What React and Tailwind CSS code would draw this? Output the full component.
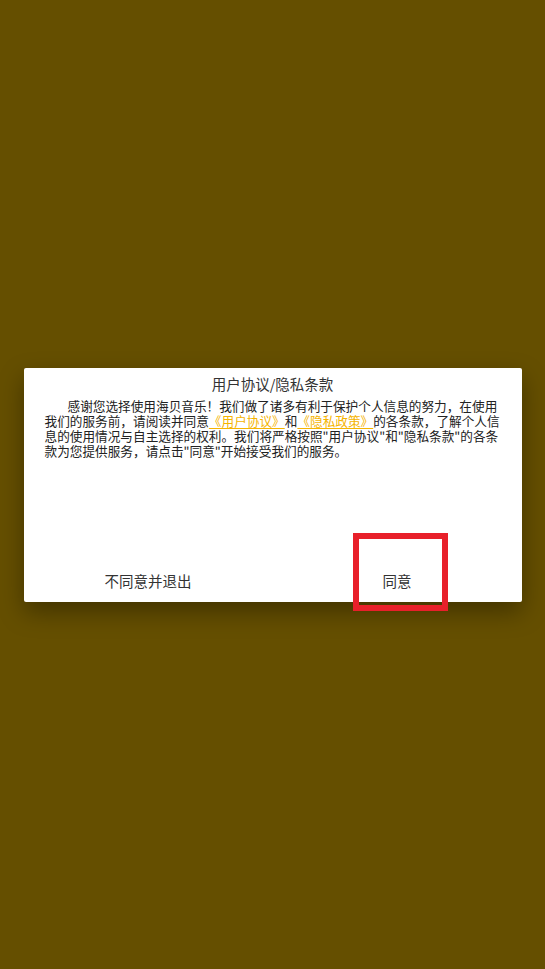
export default function App() {
  const font = { fontFamily: '"Noto Sans CJK SC", "Noto Sans", sans-serif' };

  return (
    <div className="flex h-[969px] w-full items-center justify-center bg-[#654f00]" style={font}>
      {/* 协议弹窗 */}
      <div className="relative flex h-[234px] w-[498px] flex-col rounded-[2px] bg-white shadow-[0_10px_24px_rgba(0,0,0,0.35)]">
        <div className="pt-[7px] text-center text-[14.5px] leading-[18px] text-[#333]">用户协议/隐私条款</div>

        <div className="mt-[5px] px-[21px] text-[12.65px] leading-[15px] text-[#222]">
          <div className="whitespace-nowrap pl-[23px]">感谢您选择使用海贝音乐！我们做了诸多有利于保护个人信息的努力，在使用</div>
          <div className="whitespace-nowrap">
            我们的服务前，请阅读并同意
            <a className="text-[#f5b400] underline underline-offset-2">《用户协议》</a>
            和
            <a className="text-[#f5b400] underline underline-offset-2">《隐私政策》</a>
            的各条款，了解个人信
          </div>
          <div className="whitespace-nowrap">息的使用情况与自主选择的权利。我们将严格按照"用户协议"和"隐私条款"的各条</div>
          <div className="whitespace-nowrap">款为您提供服务，请点击"同意"开始接受我们的服务。</div>
        </div>

        <div className="mt-auto flex h-[42px]">
          <button className="flex-1 text-[14.5px] text-[#333]">不同意并退出</button>
          <button className="flex-1 text-[14.5px] text-[#333]">同意</button>
        </div>

        {/* 红色标注框 */}
        <div className="absolute left-[329px] top-[165px] h-[78px] w-[95px] border-[6px] border-[#e8202a]" />
      </div>
    </div>
  );
}
